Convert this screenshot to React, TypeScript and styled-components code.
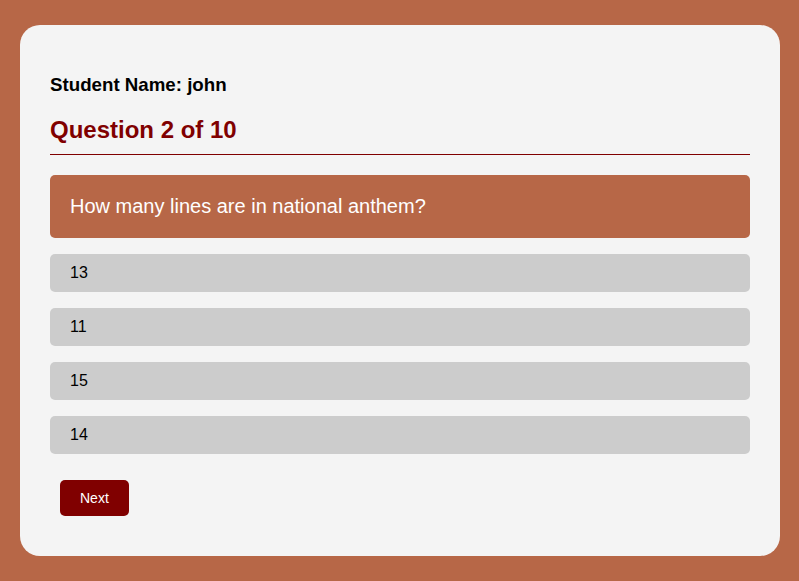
import styled, { createGlobalStyle } from 'styled-components';

const COLORS = {
  RUST: '#b76747',
  CARD: '#f4f4f4',
  MAROON: '#800000',
  OPTION: '#cccccc',
  WHITE: '#ffffff',
  BLACK: '#000000',
};

const GlobalStyle = createGlobalStyle`
  html, body {
    margin: 0;
    padding: 0;
    background: ${COLORS.RUST};
  }
  body {
    font-family: 'Liberation Sans', Arial, sans-serif;
  }
  #root {
    padding: 25px 19px 25px 20px;
  }
`;

const Card = styled.div`
  background: ${COLORS.CARD};
  border-radius: 20px;
  padding: 30px;
  display: flex;
  flex-direction: column;
  align-items: stretch;
`;

const StudentName = styled.h3`
  margin: 19px 0 0;
  font-size: 18.72px;
  line-height: 21px;
  font-weight: 700;
  color: ${COLORS.BLACK};
`;

const QuestionCount = styled.h2`
  margin: 21px 0 0;
  padding-bottom: 10px;
  font-size: 24px;
  line-height: 28px;
  font-weight: 700;
  color: ${COLORS.MAROON};
  border-bottom: 1px solid ${COLORS.MAROON};
`;

const QuestionBox = styled.div`
  margin-top: 20px;
  background: ${COLORS.RUST};
  color: ${COLORS.WHITE};
  font-size: 20px;
  line-height: 23px;
  padding: 20px;
  border-radius: 5px;
`;

const OptionList = styled.div`
  display: flex;
  flex-direction: column;
  gap: 16px;
  margin-top: 16px;
`;

const Option = styled.div<{ selected?: boolean }>`
  background: ${({ selected }) => (selected ? '#bbbbbb' : COLORS.OPTION)};
  color: ${COLORS.BLACK};
  font-size: 16px;
  line-height: 18px;
  padding: 10px 20px;
  border-radius: 5px;
  cursor: pointer;
`;

const NextButton = styled.button`
  align-self: flex-start;
  margin: 26px 0 10px 10px;
  background: ${COLORS.MAROON};
  color: ${COLORS.WHITE};
  font-family: 'Liberation Sans', Arial, sans-serif;
  font-size: 14px;
  line-height: 16px;
  padding: 10px 20px;
  border: none;
  border-radius: 5px;
  cursor: pointer;
`;

const options = ['13', '11', '15', '14'];

export default function App() {
  return (
    <>
      <GlobalStyle />
      <Card>
        <StudentName>Student Name: john</StudentName>
        <QuestionCount>Question 2 of 10</QuestionCount>
        <QuestionBox>How many lines are in national anthem?</QuestionBox>
        <OptionList>
          {options.map((o) => (
            <Option key={o}>{o}</Option>
          ))}
        </OptionList>
        <NextButton>Next</NextButton>
      </Card>
    </>
  );
}
